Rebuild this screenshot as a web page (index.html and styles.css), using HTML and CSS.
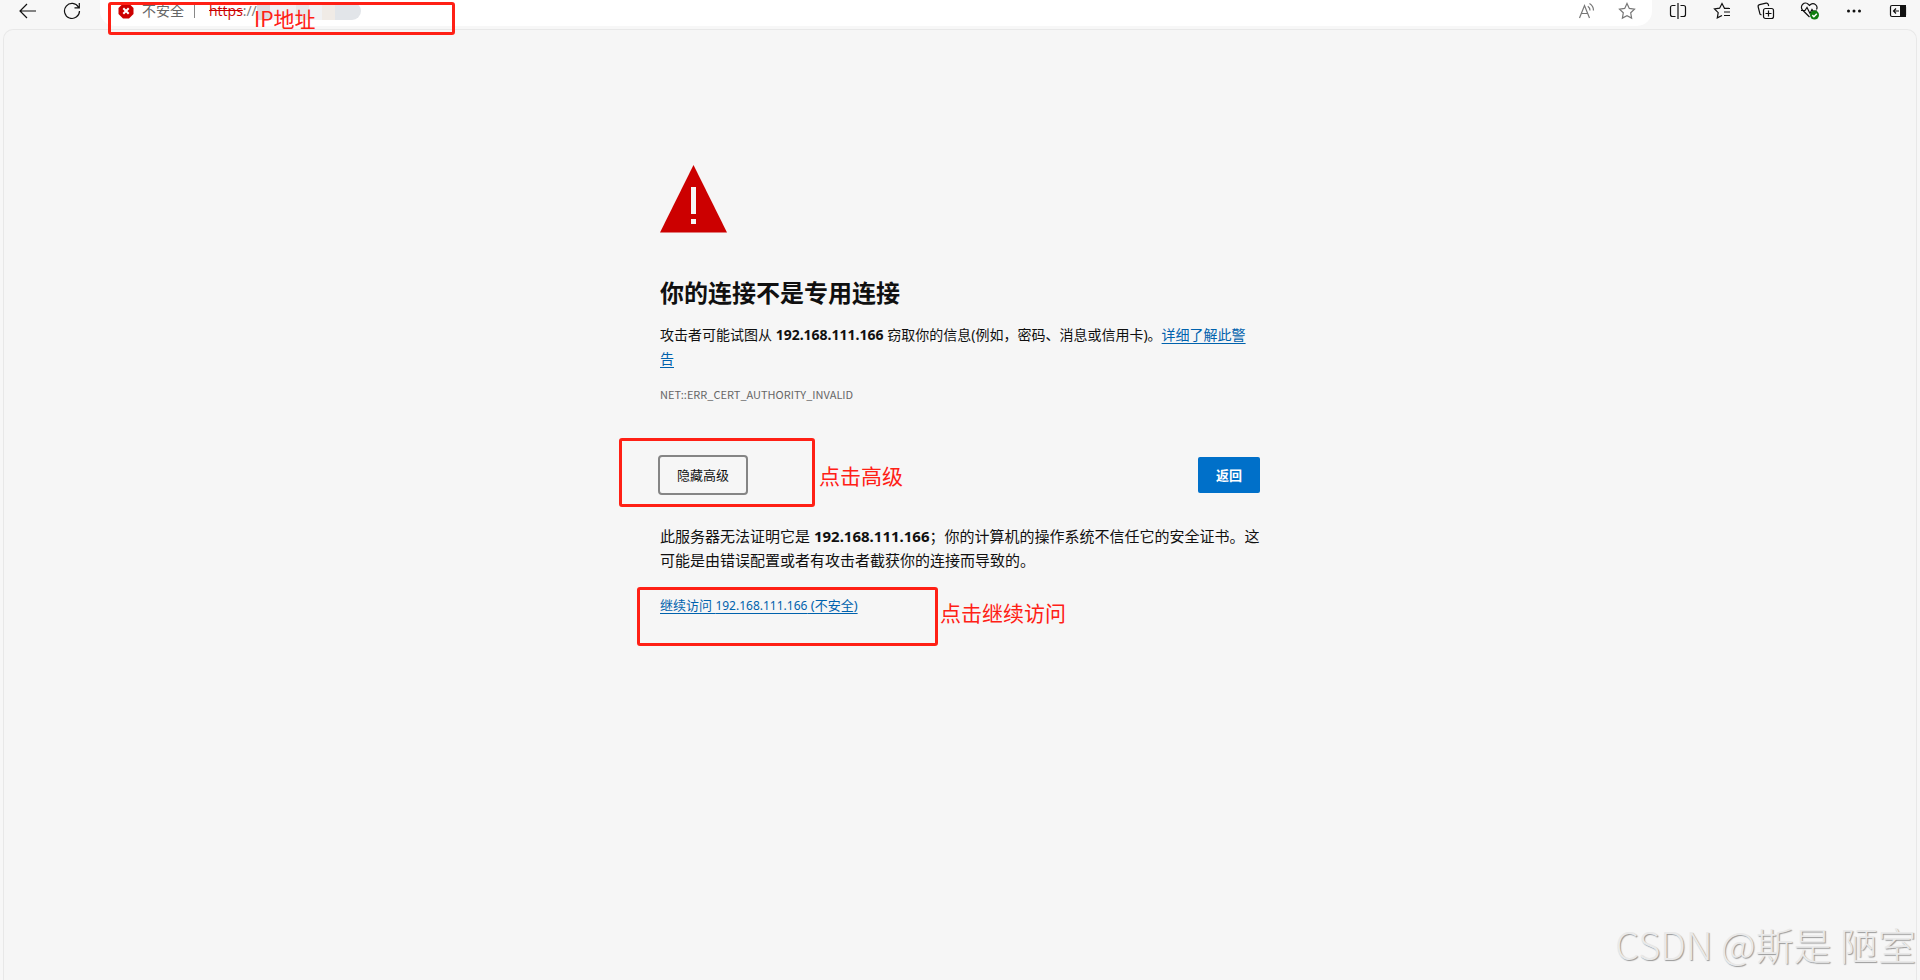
FILE: index.html
```html
<!DOCTYPE html>
<html lang="zh-CN">
<head>
  <meta charset="utf-8">
  <title>隐私错误</title>
  <link rel="stylesheet" href="styles.css">
</head>
<body>
<header class="toolbar">
  <button class="tool" aria-label="返回上一页">
    <svg width="18" height="18" viewBox="0 0 18 18"><path d="M17 9H1.500M8 2L1 9l7 7"/></svg>
  </button>
  <button class="tool" aria-label="刷新">
    <svg width="18" height="18" viewBox="0 0 18 18"><path d="M15.500 5.200A7.500 7.500 0 1 0 16.500 9M16.300 1v4.800h-4.800"/></svg>
  </button>

  <div class="address">
    <svg class="badge" width="16" height="16" viewBox="0 0 16 16"><path class="badge-bg" d="M5 .500h6L15.500 5v6L11 15.500H5L.500 11V5z"/><path class="badge-x" d="M5.300 5.300l5.400 5.400M10.700 5.300l-5.400 5.400"/></svg>
    <span class="insecure">不安全</span>
    <span class="divider"></span>
    <span class="url"><s>https</s>://</span>
    <span class="mosaic"><i></i><i></i><i></i><i></i><i></i><i></i><i></i><i></i></span>
    <span class="space"></span>
    <button class="tool small grey" aria-label="大声朗读">
      <svg width="18" height="18" viewBox="0 0 18 18"><path d="M1.500 16L6.500 3.500 11.500 16M3.200 11.500h6.600M9.800 4.200a5 5 0 0 1 2.200 4.300M11.500 1.500a8 8 0 0 1 4 7"/></svg>
    </button>
    <button class="tool small grey" aria-label="收藏此页">
      <svg width="18" height="18" viewBox="0 0 18 18"><path d="M9 1.500l2.300 4.900 5.200.700-3.800 3.700.900 5.300L9 13.600l-4.600 2.500.900-5.300L1.500 7.100l5.200-.700z"/></svg>
    </button>
    <div class="mark mark-ip"><span>IP地址</span></div>
  </div>

  <div class="tools">
    <button class="tool" aria-label="拆分屏幕">
      <svg width="18" height="18" viewBox="0 0 18 18"><path d="M9 1v16M6.500 3.500h-3a2 2 0 0 0-2 2v7a2 2 0 0 0 2 2h3M11.500 3.500h3a2 2 0 0 1 2 2v7a2 2 0 0 1-2 2h-3"/></svg>
    </button>
    <button class="tool" aria-label="收藏夹">
      <svg width="18" height="18" viewBox="0 0 18 18"><path d="M16 6.300h-4.500L9 1.500 6.600 6.200l-5.100.700 3.700 3.700-.900 5.300 4.700-2.400M11 6.500h6M11 10h6M11 13.500h6"/></svg>
    </button>
    <button class="tool" aria-label="集锦">
      <svg width="18" height="18" viewBox="0 0 18 18"><rect x="6.500" y="6.500" width="10" height="10" rx="2"/><path d="M11.500 8.500v6M8.500 11.500h6M4.500 13l-1.500-.800L1.200 5A2 2 0 0 1 2.600 2.600l6.400-1.500a2 2 0 0 1 2.300 1.400L11.700 4"/></svg>
    </button>
    <button class="tool" aria-label="浏览器概要">
      <svg width="20" height="18" viewBox="0 0 20 18"><path d="M9.500 15L2.500 8A4 4 0 0 1 8.500 2.500l1 1 1-1A4 4 0 0 1 16.500 7.500M1 8.500h4l2-3 3 6 2-4 1 1.500h4"/><circle class="ok" cx="14.500" cy="13" r="4.500"/><path class="tick" d="M12.300 13.100l1.600 1.600 2.900-3"/></svg>
    </button>
    <button class="tool" aria-label="设置及其他">
      <svg width="18" height="18" viewBox="0 0 18 18"><circle class="solid" cx="3.500" cy="9" r="1.500"/><circle class="solid" cx="9" cy="9" r="1.500"/><circle class="solid" cx="14.500" cy="9" r="1.500"/></svg>
    </button>
    <button class="tool" aria-label="侧栏">
      <svg width="18" height="18" viewBox="0 0 18 18"><rect x="1.500" y="3.500" width="15" height="11" rx="1.500"/><path class="solid" d="M11 3h6v12h-6z"/><path d="M10 9H4.500M7 6.500L4.500 9 7 11.500"/></svg>
    </button>
  </div>
</header>

<main class="page">
  <div class="interstitial">
    <svg class="warning" width="68" height="68" viewBox="0 0 68 68"><path class="red" d="M33.500 0L67 67.500H0z"/><path class="bang" d="M31 22h5v27h-5zM31 54h5v5h-5z"/></svg>

    <h1>你的连接不是专用连接</h1>
    <p class="lead">攻击者可能试图从 <b>192.168.111.166</b> 窃取你的信息(例如，密码、消息或信用卡)。<a href="#">详细了解此警告</a></p>
    <div class="error-code">NET::ERR_CERT_AUTHORITY_INVALID</div>

    <div class="actions">
      <button class="details">隐藏高级</button>
      <button class="primary">返回</button>
      <div class="mark mark-advanced"><span>点击高级</span></div>
    </div>

    <p class="more">此服务器无法证明它是 <b>192.168.111.166</b>；你的计算机的操作系统不信任它的安全证书。这可能是由错误配置或者有攻击者截获你的连接而导致的。</p>
    <div class="proceed">
      <a href="#">继续访问 <span class="host">192.168.111.166</span> (不安全)</a>
      <div class="mark mark-proceed"><span>点击继续访问</span></div>
    </div>
  </div>
  <div class="watermark">CSDN @斯是 陋室</div>
</main>
</body>
</html>
```
FILE: styles.css
```css
* { box-sizing: border-box; }

body {
	margin: 0;
	min-height: 100vh;
	display: flex;
	flex-direction: column;
	font-family: "Noto Sans", "Noto Sans CJK SC", sans-serif;
	background: #f7f7f7;
	color: #101010;
}

button { font-family: inherit; cursor: pointer; }
h1, p { margin: 0; }

a {
	color: #0062ad;
	text-decoration: underline;
	text-decoration-thickness: 1px;
	text-underline-offset: 3px;
}

/* toolbar */
.toolbar {
	display: flex;
	height: 29px;
	padding-left: 6px;
}

.tool {
	display: flex;
	align-items: center;
	justify-content: center;
	width: 44px;
	height: 22px;
	padding: 0;
	border: none;
	background: none;
}

.tool.small { width: 40px; }
.tool svg { fill: none; stroke: #111; stroke-width: 1.2; }
.tool.grey svg { stroke: #777; }
.tool .solid { fill: #111; stroke: none; }
.tool .ok { fill: #107c10; stroke: none; }
.tool .tick { stroke: #fff; stroke-width: 1.5; }

.tools { display: flex; margin-left: 4px; }

.address {
	position: relative;
	z-index: 1;
	flex: 1;
	display: flex;
	align-items: center;
	height: 26px;
	margin-left: 6px;
	padding: 0 5px 4px 18px;
	border-radius: 0 0 15px 15px;
	background: #fff;
	font-size: 14px;
	line-height: 22px;
}

.badge-bg { fill: #c00; }
.badge-x { stroke: #fff; stroke-width: 2; }
.insecure { margin-left: 8px; color: #666; }
.divider { width: 1px; height: 14px; margin: 0 14px 0 10px; background: #888; }
.url { color: #777; font-family: "Open Sans", "Noto Sans", sans-serif; }
.url s { color: #c00; }
.space { flex: 1; }

.mosaic {
	display: flex;
	height: 18px;
	border-radius: 0 9px 9px 0;
	overflow: hidden;
}

.mosaic i { width: 13px; background: #f1f2f4; }
.mosaic i:nth-child(1) { background: #dcdde2; }
.mosaic i:nth-child(4) { background: #e6e8ea; }
.mosaic i:nth-child(6) { background: #f0ebe6; }
.mosaic i:nth-child(n+7) { background: #e2e5e9; }

/* page frame */
.page {
	position: relative;
	flex: 1;
	margin: 0 3px;
	border: 1px solid #e8e8e8;
	border-bottom: none;
	border-radius: 10px 10px 0 0;
	background: #f6f6f6;
}

.interstitial {
	max-width: 600px;
	margin: 0 auto;
	padding-top: 135px;
	font-size: 14px;
	line-height: 24px;
}

.warning { display: block; }
.warning .red { fill: #c00; }
.warning .bang { fill: #f6f6f6; }

h1 {
	margin-top: 44px;
	font-size: 24px;
	line-height: 32px;
}

.lead { margin-top: 14px; padding-right: 10px; }

.error-code {
	margin-top: 12px;
	color: #666;
	font-family: "Noto Sans CJK SC", sans-serif;
	font-size: 11px;
	line-height: 22px;
}

.actions {
	position: relative;
	display: flex;
	justify-content: space-between;
	margin-top: 52px;
}

.actions button {
	height: 36px;
	padding: 0 18px 2px;
	border: none;
	border-radius: 2px;
	font-size: 13px;
}

.actions .details {
	padding: 0 17px 2px;
	background: #f6f6f6;
	color: #101010;
	outline: 2px solid #858585;
}

.actions .primary {
	background: #0070c9;
	color: #fff;
	font-weight: bold;
}

.more {
	margin-top: 31px;
	font-size: 15px;
}

.proceed {
	position: relative;
	margin-top: 21px;
	font-size: 13px;
}

.host { font-size: 12px; }

/* red notes over the page */
.mark {
	position: absolute;
	border: 3px solid #ff2015;
	border-radius: 3px;
	color: #ff2015;
	font-family: "Noto Sans CJK SC", sans-serif;
	font-size: 21px;
	line-height: 30px;
	white-space: nowrap;
	pointer-events: none;
}

.mark span { position: absolute; left: 100%; }
.mark-ip { left: 8px; top: 2px; width: 347px; height: 33px; }
.mark-ip span { left: 143px; top: -2px; }
.mark-advanced { left: -41px; top: -19px; width: 196px; height: 69px; }
.mark-advanced span { top: 19px; margin-left: 7px; }
.mark-proceed { left: -23px; top: -6px; width: 301px; height: 59px; }
.mark-proceed span { top: 7px; margin-left: 5px; }

.watermark {
	position: absolute;
	right: 0;
	bottom: 8px;
	color: #e9e9e9;
	font-family: "Noto Sans CJK SC", sans-serif;
	font-size: 38px;
	font-weight: 300;
	line-height: 56px;
	text-shadow: 1px 1px 1px #999;
}
```
